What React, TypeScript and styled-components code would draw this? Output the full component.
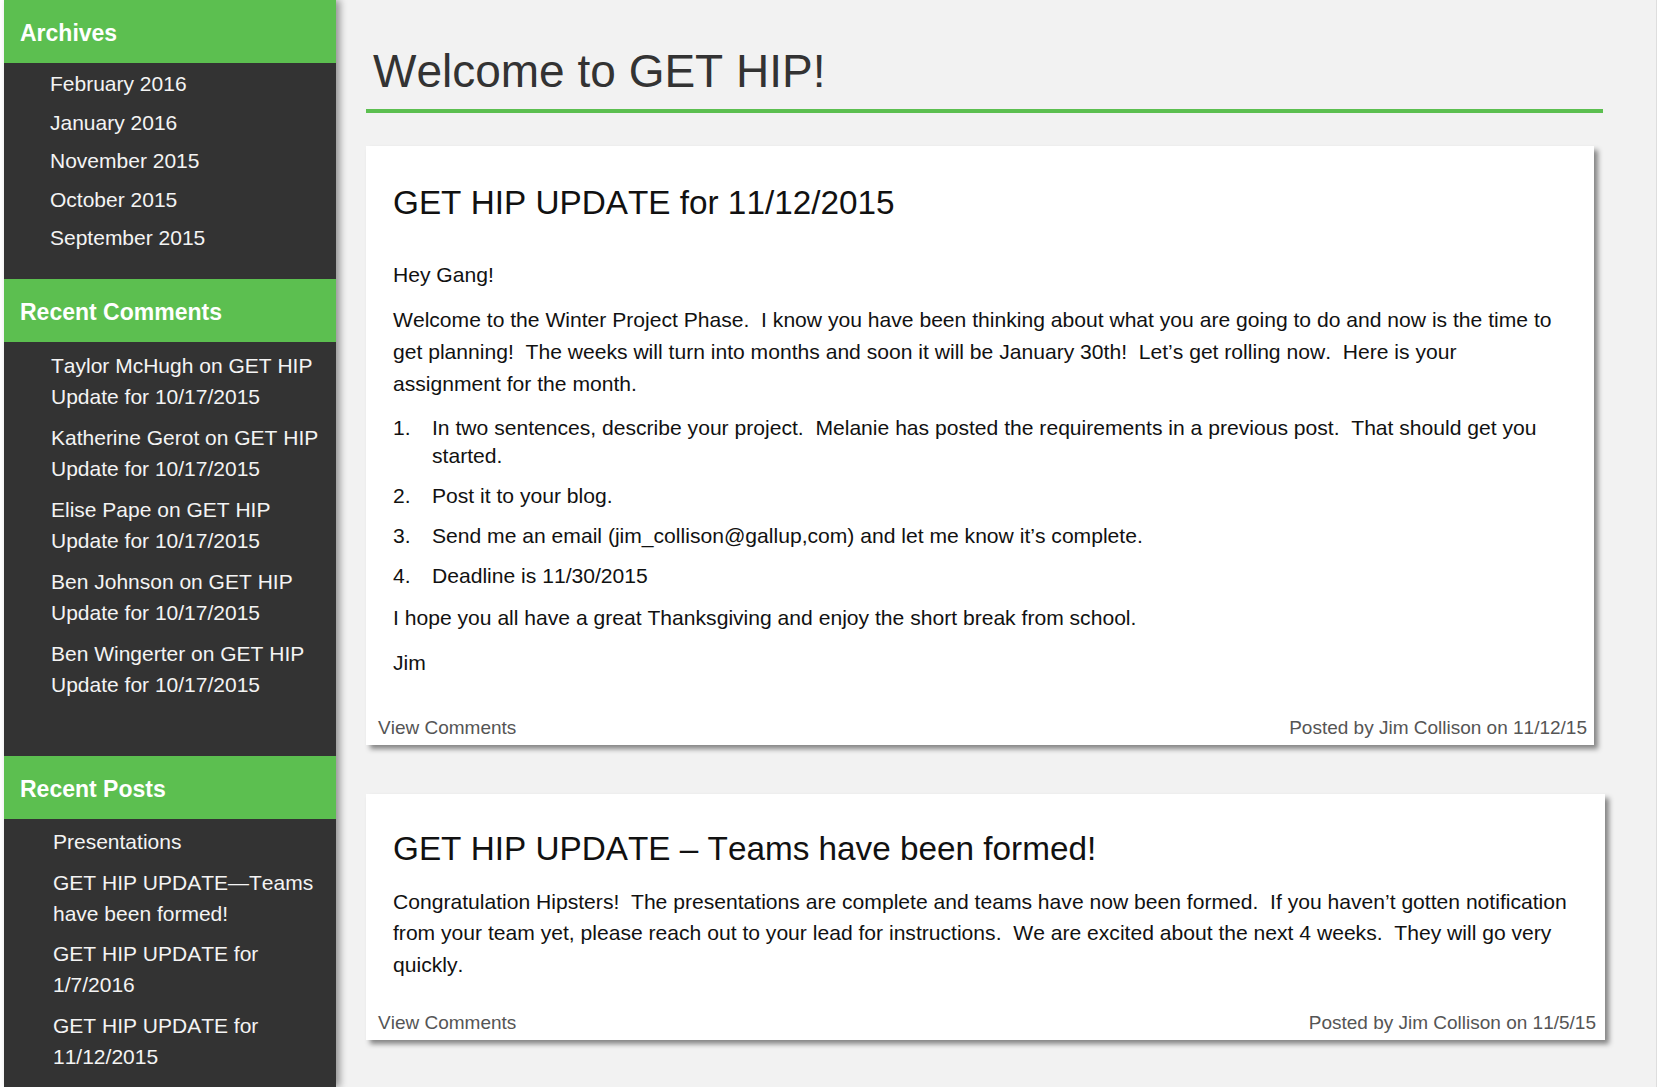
import React from "react";
import styled, { createGlobalStyle } from "styled-components";

const GREEN = "#5cbf50";

const GlobalStyle = createGlobalStyle`
  html, body {
    margin: 0;
    padding: 0;
    background: #ffffff;
    overflow: hidden;
  }
  body {
    font-family: "Liberation Sans", Arial, Helvetica, sans-serif;
    font-kerning: none;
    -webkit-font-smoothing: antialiased;
  }
  * { box-sizing: border-box; }
`;

const Page = styled.div`
  display: flex;
  height: 100vh;
  padding-left: 4px;
`;

const Sidebar = styled.aside`
  width: 332px;
  flex-shrink: 0;
  background: #333333;
  color: #f4f4f4;
  position: relative;
  z-index: 1;
  box-shadow: 4px 0 7px rgba(0, 0, 0, 0.38);
`;

const WidgetTitle = styled.h2`
  margin: 0;
  height: 62.7px;
  padding: 4px 0 0 16px;
  line-height: 58.5px;
  background: ${GREEN};
  color: #ffffff;
  font-size: 23px;
  font-weight: 700;
`;

const WidgetList = styled.ul<{ $top: number; $bottom: number; $indent: number; $gap: number }>`
  list-style: none;
  margin: 0;
  padding: ${(p) => p.$top}px 12px ${(p) => p.$bottom}px ${(p) => p.$indent}px;
  display: flex;
  flex-direction: column;
  gap: ${(p) => p.$gap}px;
`;

const WidgetItem = styled.li`
  font-size: 21px;
  line-height: 31px;
  color: #f4f4f4;
`;

const Main = styled.main`
  flex: 1;
  background: #f2f2f2;
  padding: 44px 0 0 30px;
  margin-right: 1px;
  border-right: 1px solid #dedede;
  overflow: hidden;
`;

const PageTitle = styled.h1`
  width: 1237px;
  margin: 0 0 32.5px;
  padding: 0 0 11px 7px;
  border-bottom: 4.5px solid ${GREEN};
  font-size: 46px;
  line-height: 54px;
  font-weight: 400;
  color: #333333;
`;

const Card = styled.article<{ $width: number; $top: number }>`
  width: ${(p) => p.$width}px;
  background: #ffffff;
  padding: ${(p) => p.$top}px 0 6px;
  margin-bottom: 49px;
  box-shadow: 4px 4px 5px rgba(0, 0, 0, 0.45);
  display: flex;
  flex-direction: column;
`;

const CardTitle = styled.h2<{ $gap: number; $right: number }>`
  margin: 0 0 ${(p) => p.$gap}px;
  padding: 0 ${(p) => p.$right}px 0 27px;
  font-size: 33.3px;
  line-height: 38px;
  font-weight: 400;
  color: #111111;
`;

const CardBody = styled.div<{ $right: number }>`
  padding: 0 ${(p) => p.$right}px 0 27px;
  display: flex;
  flex-direction: column;
  gap: 13.5px;
  font-size: 21.1px;
  color: #111111;
`;

const Para = styled.p`
  margin: 0;
  line-height: 31.7px;
`;

const Steps = styled.ol`
  list-style: none;
  margin: 1px 0 -2px;
  padding: 0;
  display: flex;
  flex-direction: column;
  gap: 12.2px;
`;

const Step = styled.li`
  display: grid;
  grid-template-columns: 39px 1fr;
  line-height: 28px;
`;

const CardFooter = styled.footer<{ $gap: number; $right: number }>`
  display: flex;
  justify-content: space-between;
  margin-top: ${(p) => p.$gap}px;
  padding: 0 ${(p) => p.$right}px 0 12px;
  font-size: 19px;
  line-height: 22px;
  color: #555555;
`;

const sp = (s: string) => s.replace(/ {2}/g, "\u00a0 ");

const archives = ["February 2016", "January 2016", "November 2015", "October 2015", "September 2015"];

const comments = [
  "Taylor McHugh on GET HIP Update for 10/17/2015",
  "Katherine Gerot on GET HIP Update for 10/17/2015",
  "Elise Pape on GET HIP Update for 10/17/2015",
  "Ben Johnson on GET HIP Update for 10/17/2015",
  "Ben Wingerter on GET HIP Update for 10/17/2015",
];

const posts = [
  "Presentations",
  "GET HIP UPDATE\u2014Teams have been formed!",
  "GET HIP UPDATE for 1/7/2016",
  "GET HIP UPDATE for 11/12/2015",
];

const steps = [
  "In two sentences, describe your project.  Melanie has posted the requirements in a previous post.  That should get you started.",
  "Post it to your blog.",
  "Send me an email (jim_collison@gallup,com) and let me know it\u2019s complete.",
  "Deadline is 11/30/2015",
];

export default function App() {
  return (
    <>
      <GlobalStyle />
      <Page>
        <Sidebar>
          <section>
            <WidgetTitle>Archives</WidgetTitle>
            <WidgetList $top={5.5} $bottom={26} $indent={46} $gap={7.5}>
              {archives.map((a) => (
                <WidgetItem key={a}>{a}</WidgetItem>
              ))}
            </WidgetList>
          </section>
          <section>
            <WidgetTitle>Recent Comments</WidgetTitle>
            <WidgetList $top={8.5} $bottom={56} $indent={47} $gap={10}>
              {comments.map((c) => (
                <WidgetItem key={c}>{c}</WidgetItem>
              ))}
            </WidgetList>
          </section>
          <section>
            <WidgetTitle>Recent Posts</WidgetTitle>
            <WidgetList $top={7} $bottom={10} $indent={49} $gap={9.5}>
              {posts.map((p) => (
                <WidgetItem key={p}>{p}</WidgetItem>
              ))}
            </WidgetList>
          </section>
        </Sidebar>

        <Main>
          <PageTitle>Welcome to GET HIP!</PageTitle>

          <Card $width={1228} $top={38.5}>
            <CardTitle $gap={37} $right={33}>GET HIP UPDATE for 11/12/2015</CardTitle>
            <CardBody $right={33}>
              <Para>Hey Gang!</Para>
              <Para>
                {sp(
                  "Welcome to the Winter Project Phase.  I know you have been thinking about what you are going to do and now is the time to get planning!  The weeks will turn into months and soon it will be January 30th!  Let\u2019s get rolling now.  Here is your assignment for the month."
                )}
              </Para>
              <Steps>
                {steps.map((s, i) => (
                  <Step key={i}>
                    <span>{i + 1}.</span>
                    <span>{sp(s)}</span>
                  </Step>
                ))}
              </Steps>
              <Para>I hope you all have a great Thanksgiving and enjoy the short break from school.</Para>
              <Para>Jim</Para>
            </CardBody>
            <CardFooter $gap={38} $right={7}>
              <span>View Comments</span>
              <span>Posted by Jim Collison on 11/12/15</span>
            </CardFooter>
          </Card>

          <Card $width={1239} $top={36}>
            <CardTitle $gap={17.8} $right={22}>GET HIP UPDATE {"\u2013"} Teams have been formed!</CardTitle>
            <CardBody $right={22}>
              <Para>
                {sp(
                  "Congratulation Hipsters!  The presentations are complete and teams have now been formed.  If you haven\u2019t gotten notification from your team yet, please reach out to your lead for instructions.  We are excited about the next 4 weeks.  They will go very quickly."
                )}
              </Para>
            </CardBody>
            <CardFooter $gap={31} $right={9}>
              <span>View Comments</span>
              <span>Posted by Jim Collison on 11/5/15</span>
            </CardFooter>
          </Card>
        </Main>
      </Page>
    </>
  );
}
